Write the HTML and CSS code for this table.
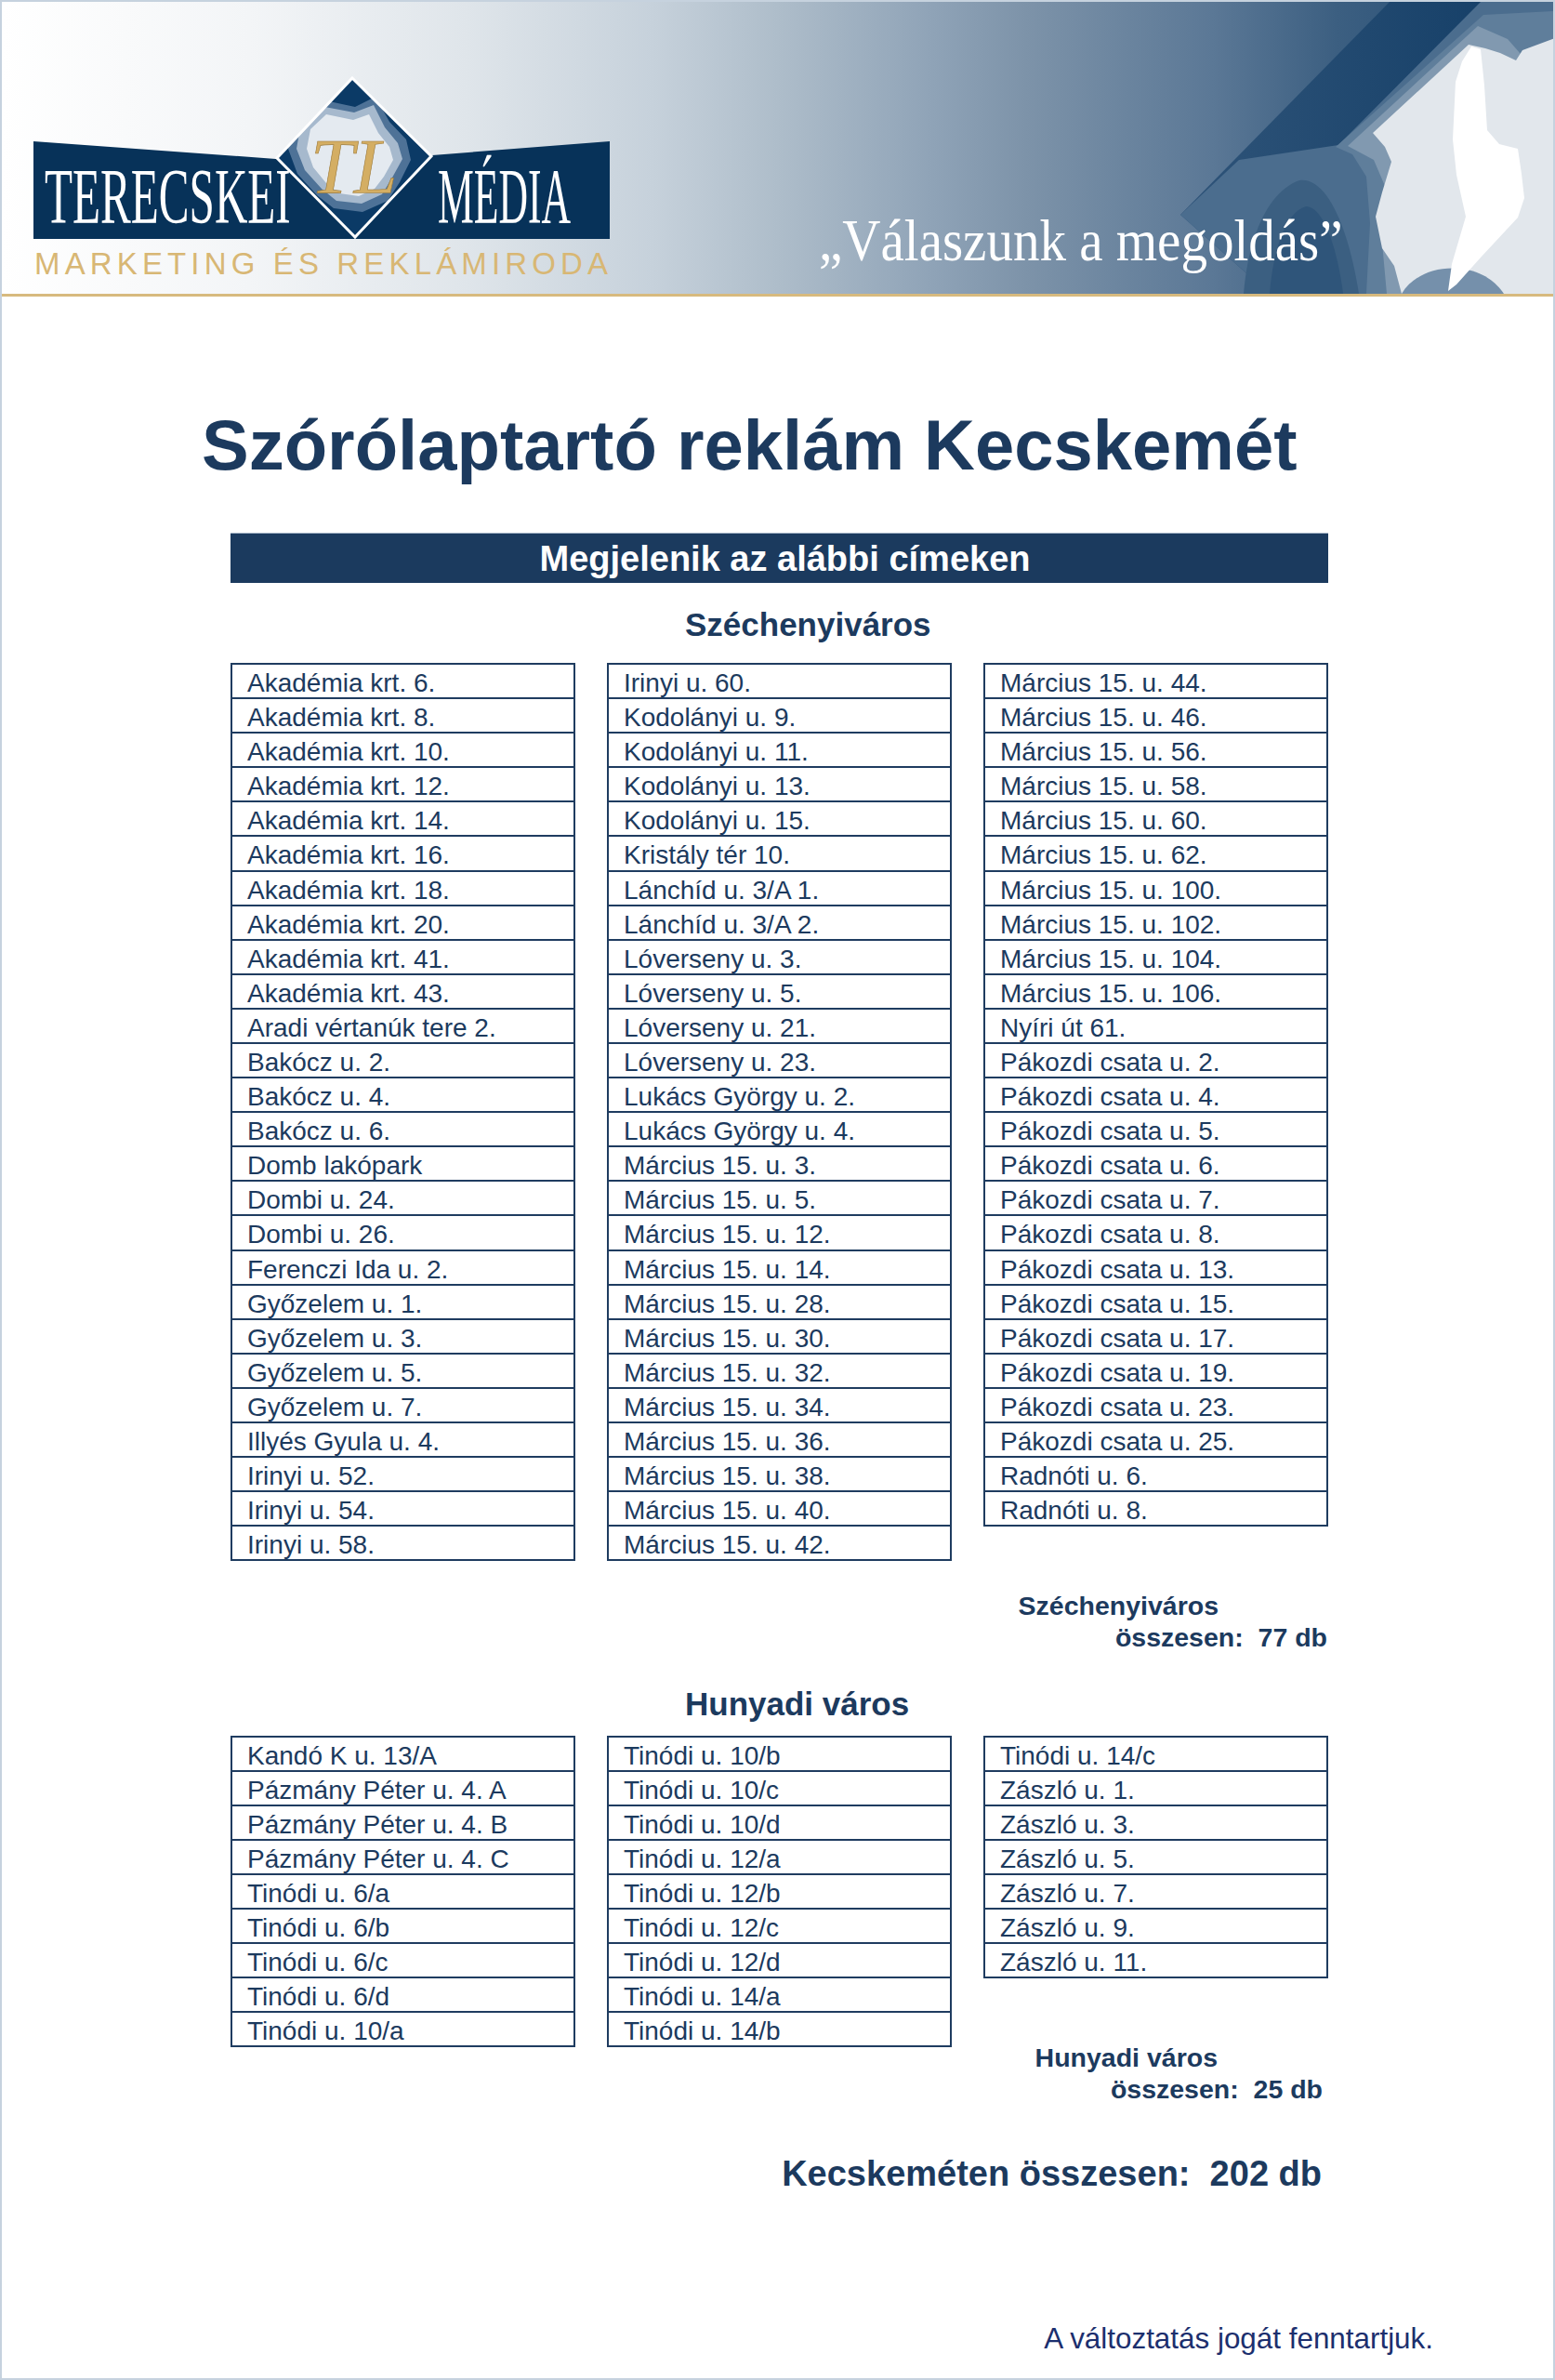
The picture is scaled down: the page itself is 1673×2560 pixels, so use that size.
FILE: index.html
```html
<!DOCTYPE html>
<html lang="hu">
<head>
<meta charset="utf-8">
<title>Szórólaptartó reklám Kecskemét</title>
<link rel="stylesheet" href="styles.css">
</head>
<body>
<div class="page">
  <header class="banner">
    <svg class="banner-art" width="420" height="314" viewBox="1251 2 420 314" aria-hidden="true">
      <defs>
        <linearGradient id="bandGrad" x1="0" y1="0" x2="1" y2="0">
          <stop offset="0" stop-color="#2f5479"/>
          <stop offset="1" stop-color="#113c65"/>
        </linearGradient>
      </defs>
      <path d="M1497,0 L1673,0 L1673,316 L1366,316 L1270,231 Z" fill="url(#bandGrad)"/>
      <path d="M1593,2 L1673,2 L1673,316 L1366,316 L1270,231 L1333,172 L1440,156 Z" fill="#4b6d8e"/>
      <path d="M1338,316 C1343,255 1364,206 1398,194 C1426,190 1450,240 1462,316 Z" fill="#3b5f81"/>
      <path d="M1366,316 C1370,266 1384,228 1405,222 C1424,222 1439,268 1445,316 Z" fill="#2f557a"/>
      <path d="M1596,16 L1673,12 L1673,316 L1470,316 L1474,240 L1470,190 L1455,166 L1437,158 Z" fill="#5f7e9b"/>
      <path d="M1590,28 L1622,42 L1636,58 L1673,42 L1673,316 L1492,316 L1486,250 L1490,200 L1478,172 L1450,157 Z" fill="#8199b0"/>
      <path d="M1580,48 L1598,52 L1614,57 L1631,65 L1638,54 L1673,41 L1673,316 L1508,316 L1500,286 L1487,267 L1480,233 L1487,207 L1497,174 L1490,158 L1477,143 Z" fill="#e2e7ec"/>
      <path d="M1508,316 C1520,296 1545,286 1572,289 C1596,292 1610,304 1618,316 Z" fill="#7590ab"/>
      <path d="M1583,50 L1593,53 L1597,92 L1600,140 L1613,155 L1633,160 L1637,187 L1640,213 L1633,234 L1593,277 L1567,306 L1558,313 L1562,284 L1577,233 L1567,188 L1563,150 L1566,88 L1573,66 Z" fill="#ffffff"/>
    </svg>
    <svg class="logo" width="700" height="314" viewBox="2 2 700 314" aria-label="Terecskei Média logó">
      <defs>
        <clipPath id="dia">
          <path d="M379,84 L464,168 L382,255 L298,170 Z"/>
        </clipPath>
      </defs>
      <path d="M36,152 L297,171 L465,167 L656,152 L656,257 L36,257 Z" fill="#073259"/>
      <path d="M379,84 L464,168 L382,255 L298,170 Z" fill="#0b3a66"/>
      <g clip-path="url(#dia)">
        <path d="M316,128 L340,106 L382,115 L404,104 L419,131 L437,150 L442,172 L430,196 L417,216 L390,228 L359,224 L341,210 L320,187 L310,160 Z" fill="#5a7ca0" opacity="0.85"/>
        <path d="M324,132 L344,114 L381,121 L402,113 L414,137 L428,154 L433,171 L422,191 L411,209 L389,219 L362,216 L346,203 L328,183 L319,160 Z" fill="#a6b9cd"/>
        <path d="M334,139 L351,123 L380,129 L397,123 L407,143 L419,158 L423,172 L413,190 L403,203 L386,211 L365,208 L351,197 L337,180 L330,160 Z" fill="#e4eaf0"/>
      </g>
      <path d="M379,84 L464,168 L382,255 L298,170 Z" fill="none" stroke="#ffffff" stroke-width="3"/>
      <text class="mono" x="334" y="208" font-size="84">TL</text>
      <text class="logo-word" transform="translate(48 240) scale(0.585 1)" font-size="84">TERECSKEI</text>
      <text class="logo-word" transform="translate(471 240) scale(0.52 1)" font-size="84">MÉDIA</text>
      <text class="logo-sub" x="37" y="295" font-size="33" textLength="617" lengthAdjust="spacing">MARKETING ÉS REKLÁMIRODA</text>
    </svg>
    <p class="slogan">„Válaszunk a megoldás”</p>
  </header>

  <h1 class="title">Szórólaptartó reklám Kecskemét</h1>

  <main class="main">
    <div class="bar">Megjelenik az alábbi címeken</div>

    <section class="district district-first">
      <h2 class="district-name">Széchenyiváros</h2>
      <div class="grid">
        <div class="col">
          <ul class="list">
            <li>Akadémia krt. 6.</li>
            <li>Akadémia krt. 8.</li>
            <li>Akadémia krt. 10.</li>
            <li>Akadémia krt. 12.</li>
            <li>Akadémia krt. 14.</li>
            <li>Akadémia krt. 16.</li>
            <li>Akadémia krt. 18.</li>
            <li>Akadémia krt. 20.</li>
            <li>Akadémia krt. 41.</li>
            <li>Akadémia krt. 43.</li>
            <li>Aradi vértanúk tere 2.</li>
            <li>Bakócz u. 2.</li>
            <li>Bakócz u. 4.</li>
            <li>Bakócz u. 6.</li>
            <li>Domb lakópark</li>
            <li>Dombi u. 24.</li>
            <li>Dombi u. 26.</li>
            <li>Ferenczi Ida u. 2.</li>
            <li>Győzelem u. 1.</li>
            <li>Győzelem u. 3.</li>
            <li>Győzelem u. 5.</li>
            <li>Győzelem u. 7.</li>
            <li>Illyés Gyula u. 4.</li>
            <li>Irinyi u. 52.</li>
            <li>Irinyi u. 54.</li>
            <li>Irinyi u. 58.</li>
          </ul>
        </div>
        <div class="col">
          <ul class="list">
            <li>Irinyi u. 60.</li>
            <li>Kodolányi u. 9.</li>
            <li>Kodolányi u. 11.</li>
            <li>Kodolányi u. 13.</li>
            <li>Kodolányi u. 15.</li>
            <li>Kristály tér 10.</li>
            <li>Lánchíd u. 3/A 1.</li>
            <li>Lánchíd u. 3/A 2.</li>
            <li>Lóverseny u. 3.</li>
            <li>Lóverseny u. 5.</li>
            <li>Lóverseny u. 21.</li>
            <li>Lóverseny u. 23.</li>
            <li>Lukács György u. 2.</li>
            <li>Lukács György u. 4.</li>
            <li>Március 15. u. 3.</li>
            <li>Március 15. u. 5.</li>
            <li>Március 15. u. 12.</li>
            <li>Március 15. u. 14.</li>
            <li>Március 15. u. 28.</li>
            <li>Március 15. u. 30.</li>
            <li>Március 15. u. 32.</li>
            <li>Március 15. u. 34.</li>
            <li>Március 15. u. 36.</li>
            <li>Március 15. u. 38.</li>
            <li>Március 15. u. 40.</li>
            <li>Március 15. u. 42.</li>
          </ul>
        </div>
        <div class="col">
          <ul class="list">
            <li>Március 15. u. 44.</li>
            <li>Március 15. u. 46.</li>
            <li>Március 15. u. 56.</li>
            <li>Március 15. u. 58.</li>
            <li>Március 15. u. 60.</li>
            <li>Március 15. u. 62.</li>
            <li>Március 15. u. 100.</li>
            <li>Március 15. u. 102.</li>
            <li>Március 15. u. 104.</li>
            <li>Március 15. u. 106.</li>
            <li>Nyíri út 61.</li>
            <li>Pákozdi csata u. 2.</li>
            <li>Pákozdi csata u. 4.</li>
            <li>Pákozdi csata u. 5.</li>
            <li>Pákozdi csata u. 6.</li>
            <li>Pákozdi csata u. 7.</li>
            <li>Pákozdi csata u. 8.</li>
            <li>Pákozdi csata u. 13.</li>
            <li>Pákozdi csata u. 15.</li>
            <li>Pákozdi csata u. 17.</li>
            <li>Pákozdi csata u. 19.</li>
            <li>Pákozdi csata u. 23.</li>
            <li>Pákozdi csata u. 25.</li>
            <li>Radnóti u. 6.</li>
            <li>Radnóti u. 8.</li>
          </ul>
          <div class="sum">
            <div class="sum-name">Széchenyiváros</div>
            <div class="sum-total">összesen:&nbsp; 77 db</div>
          </div>
        </div>
      </div>
    </section>

    <section class="district district-second">
      <h2 class="district-name">Hunyadi város</h2>
      <div class="grid">
        <div class="col">
          <ul class="list">
            <li>Kandó K u. 13/A</li>
            <li>Pázmány Péter u. 4. A</li>
            <li>Pázmány Péter u. 4. B</li>
            <li>Pázmány Péter u. 4. C</li>
            <li>Tinódi u. 6/a</li>
            <li>Tinódi u. 6/b</li>
            <li>Tinódi u. 6/c</li>
            <li>Tinódi u. 6/d</li>
            <li>Tinódi u. 10/a</li>
          </ul>
        </div>
        <div class="col">
          <ul class="list">
            <li>Tinódi u. 10/b</li>
            <li>Tinódi u. 10/c</li>
            <li>Tinódi u. 10/d</li>
            <li>Tinódi u. 12/a</li>
            <li>Tinódi u. 12/b</li>
            <li>Tinódi u. 12/c</li>
            <li>Tinódi u. 12/d</li>
            <li>Tinódi u. 14/a</li>
            <li>Tinódi u. 14/b</li>
          </ul>
        </div>
        <div class="col">
          <ul class="list">
            <li>Tinódi u. 14/c</li>
            <li>Zászló u. 1.</li>
            <li>Zászló u. 3.</li>
            <li>Zászló u. 5.</li>
            <li>Zászló u. 7.</li>
            <li>Zászló u. 9.</li>
            <li>Zászló u. 11.</li>
          </ul>
          <div class="sum sum-second">
            <div class="sum-name">Hunyadi város</div>
            <div class="sum-total">összesen:&nbsp; 25 db</div>
          </div>
        </div>
      </div>
    </section>

    <p class="grand">Kecskeméten összesen:&nbsp; 202 db</p>
  </main>

  <p class="note">A változtatás jogát fenntartjuk.</p>
</div>
</body>
</html>
```
FILE: styles.css
```css
* { box-sizing: border-box; }

html, body {
  margin: 0;
  padding: 0;
  background: #ffffff;
}

body {
  font-family: "Liberation Sans", Arial, sans-serif;
  color: #1c3a5e;
}

.page {
  width: 1673px;
  height: 2560px;
  border: 2px solid #c6d2de;
  overflow: hidden;
  background: #ffffff;
}

/* ---------- banner ---------- */
.banner {
  position: relative;
  height: 317px;
  display: flex;
  align-items: flex-start;
  border-bottom: 3px solid #d7ba7e;
  background: linear-gradient(90deg,
    #ffffff 0%,
    #f3f5f7 16%,
    #dfe5ea 30%,
    #c6d1db 42%,
    #aebdca 50%,
    #8fa3b7 60%,
    #7d93a9 66%,
    #5b7896 78%,
    #3c5f81 86%,
    #1d4770 100%);
}

.banner-art {
  position: absolute;
  top: 0;
  right: 0;
  display: block;
}

.logo {
  display: block;
  flex-shrink: 0;
}

.logo-word {
  font-family: "Liberation Serif", "Times New Roman", serif;
  fill: #ffffff;
}

.logo-sub {
  font-family: "Liberation Sans", Arial, sans-serif;
  fill: #d8b774;
}

.mono {
  font-family: "Liberation Serif", "Times New Roman", serif;
  font-style: italic;
  fill: #d4ae63;
  stroke: #9c7a3a;
  stroke-width: 0.6;
}

.slogan {
  position: relative;
  z-index: 1;
  margin: 221.7px 0 0 179px;
  font-family: "Liberation Serif", "Times New Roman", serif;
  font-size: 63px;
  line-height: 70px;
  color: #ffffff;
  white-space: nowrap;
  transform: scaleX(0.905);
  transform-origin: left center;
}

/* ---------- title ---------- */
.title {
  margin: 121.7px 0 0 0;
  padding-left: 215px;
  font-size: 76px;
  line-height: 76px;
  font-weight: bold;
  color: #1c3a5e;
  white-space: nowrap;
}

/* ---------- main ---------- */
.main {
  width: 1181px;
  margin-left: 246px;
}

.bar {
  margin-top: 56.3px;
  height: 54px;
  line-height: 54px;
  background: #1b3a5e;
  border-top: 1px solid #9fb0c2;
  color: #ffffff;
  font-size: 38px;
  font-weight: bold;
  text-align: center;
  padding-left: 12px;
}

.district-name {
  margin: 0;
  padding-left: 489px;
  font-size: 35px;
  line-height: 40px;
  font-weight: bold;
  color: #1c3a5e;
}

.district-first .district-name { margin-top: 25.2px; }
.district-first .grid { margin-top: 20.8px; }
.district-second .district-name { margin-top: 34.4px; }
.district-second .grid { margin-top: 13.8px; }

.grid {
  display: grid;
  grid-template-columns: repeat(3, 371px);
  column-gap: 34px;
  align-items: start;
}

.list {
  list-style: none;
  margin: 0;
  padding: 0;
  border: 2px solid #1f3c60;
  border-bottom: 0;
}

.list li {
  height: 37.1px;
  border-bottom: 2px solid #1f3c60;
  padding-left: 16px;
  font-size: 28px;
  line-height: 40px;
  color: #1c3a5e;
  white-space: nowrap;
}

.sum {
  margin-top: 68px;
  font-size: 28.5px;
  line-height: 34px;
  font-weight: bold;
  text-align: right;
  color: #1c3a5e;
  white-space: nowrap;
}

.sum-name { padding-right: 118px; }
.sum-total { padding-right: 1px; }
.sum-second .sum-name { padding-right: 119px; }
.sum-second .sum-total { padding-right: 6px; }

.grand {
  margin: 52.1px 0 0 0;
  padding-right: 7px;
  font-size: 38px;
  line-height: 44px;
  font-weight: bold;
  text-align: right;
  color: #1c3a5e;
  white-space: nowrap;
}

.note {
  margin: 137.3px 0 0 0;
  padding-right: 129px;
  font-size: 31.4px;
  line-height: 36px;
  text-align: right;
  color: #1c2f6e;
}
```
